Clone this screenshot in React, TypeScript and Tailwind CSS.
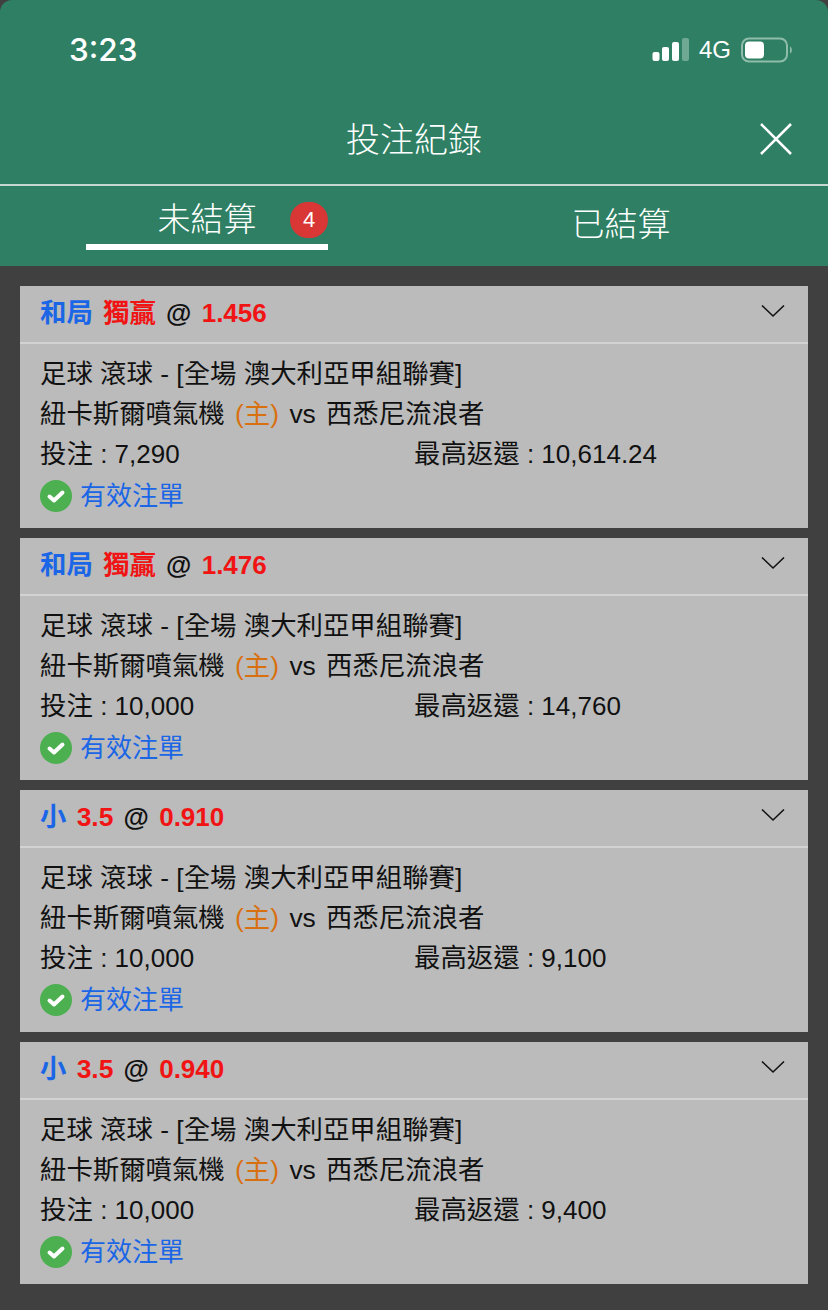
import React from "react";

const bets = [
  { pick: "和局", tag: "獨贏", odds: "1.456", stake: "7,290", payout: "10,614.24" },
  { pick: "和局", tag: "獨贏", odds: "1.476", stake: "10,000", payout: "14,760" },
  { pick: "小", tag: "3.5", odds: "0.910", stake: "10,000", payout: "9,100" },
  { pick: "小", tag: "3.5", odds: "0.940", stake: "10,000", payout: "9,400" },
];

const StatusIcons: React.FC = () => (
  <div className="flex items-center">
    <svg width="38" height="26" viewBox="0 0 38 26">
      <rect x="0.5" y="15" width="7" height="9" rx="2" fill="#fff" />
      <rect x="10" y="10" width="7" height="14" rx="2" fill="#fff" />
      <rect x="20" y="5" width="7" height="19" rx="2" fill="#fff" />
      <rect x="30" y="1" width="7" height="23" rx="2" fill="#6fa893" />
    </svg>
    <span className="ml-[9px] text-[24px] leading-none text-white font-['Liberation_Sans',sans-serif]">4G</span>
    <svg className="ml-[10px]" width="54" height="26" viewBox="0 0 54 26">
      <rect x="1" y="1.5" width="45" height="23" rx="7" fill="none" stroke="#8fbcab" strokeWidth="2" />
      <rect x="4" y="4.5" width="19" height="17" rx="4" fill="#fff" />
      <path d="M49 9.5c2.5 1 2.5 6 0 7z" fill="#8fbcab" />
    </svg>
  </div>
);

const BetCard: React.FC<{ bet: (typeof bets)[number] }> = ({ bet }) => (
  <div className="bg-[#bbbbbb] text-[26.4px] text-[#111111]">
    <div className="flex h-[58px] items-center justify-between border-b-2 border-[#d2d2d2] pl-[20px] pr-[23px]">
      <div className="flex items-center gap-[10.25px] pb-[1px] font-bold">
        <span className="text-[#1a66e6]">{bet.pick}</span>
        <span className="text-[#f01414]">{bet.tag}</span>
        <span className="text-[26px] text-[#111111]">@</span>
        <span className="text-[26px] text-[#f01414]">{bet.odds}</span>
      </div>
      <svg className="mb-[6px]" width="24" height="14" viewBox="0 0 24 14" fill="none" stroke="#111" strokeWidth="1.6">
        <path d="M1 1.5 12 12 23 1.5" />
      </svg>
    </div>
    <div className="px-[20px] pt-[10px] pb-[16px] leading-[40px]">
      <div>足球 滾球 - [全場 澳大利亞甲組聯賽]</div>
      <div className="[word-spacing:3px]">
        紐卡斯爾噴氣機 <span className="text-[#d9700f]">(主)</span> vs 西悉尼流浪者
      </div>
      <div className="grid grid-cols-2">
        <div>
          投注 <span className="text-[26px]">: {bet.stake}</span>
        </div>
        <div>
          最高返還 <span className="text-[26px]">: {bet.payout}</span>
        </div>
      </div>
      <div className="mt-[6px] flex h-[32px] items-center gap-[8px] text-[26px] text-[#1a66e6]">
        <svg width="32" height="32" viewBox="0 0 32 32">
          <circle cx="16" cy="16" r="16" fill="#4caf50" />
          <path d="M9.5 16.5 14 20.5 22.5 12.5" fill="none" stroke="#fff" strokeWidth="4" strokeLinecap="round" strokeLinejoin="round" />
        </svg>
        <span>有效注單</span>
      </div>
    </div>
  </div>
);

export default function App() {
  return (
    <div className="h-[1310px] w-[828px] overflow-hidden bg-[#404040] font-['Liberation_Sans','Noto_Sans_CJK_TC',sans-serif]">
      <header className="rounded-t-[12px] bg-[#2e7f63] text-white">
        <div className="flex h-[100px] items-center justify-between pl-[69px] pr-[33px]">
          <span className="text-[31.5px] font-medium font-['Inter',sans-serif]">3:23</span>
          <StatusIcons />
        </div>
        <div className="relative flex h-[84px] items-center justify-center border-b-2 border-[#c6d8d1] box-content">
          <h1 className="pb-[3px] text-[34px] font-light">投注紀錄</h1>
          <svg className="absolute right-[36px] top-[23px]" width="32" height="32" viewBox="0 0 32 32" fill="none" stroke="#fff" strokeWidth="2.6">
            <path d="M1 1 31 31M31 1 1 31" />
          </svg>
        </div>
        <div className="grid h-[80px] grid-cols-2 text-[33px] font-light">
          <div className="flex justify-center">
            <div className="relative mt-[12px] flex h-[52px] w-[242px] justify-center border-b-[6px] border-white leading-[44px]">
              未結算
              <span className="absolute right-0 top-[4px] flex h-[36px] w-[38px] items-center justify-center rounded-full bg-[#d93636] text-[22px] font-normal leading-none">
                4
              </span>
            </div>
          </div>
          <div className="pt-[18px] text-center leading-[42px]">已結算</div>
        </div>
      </header>
      <main className="flex flex-col gap-[10px] px-[20px] pt-[20px]">
        {bets.map((bet) => (
          <BetCard key={bet.odds} bet={bet} />
        ))}
      </main>
    </div>
  );
}
